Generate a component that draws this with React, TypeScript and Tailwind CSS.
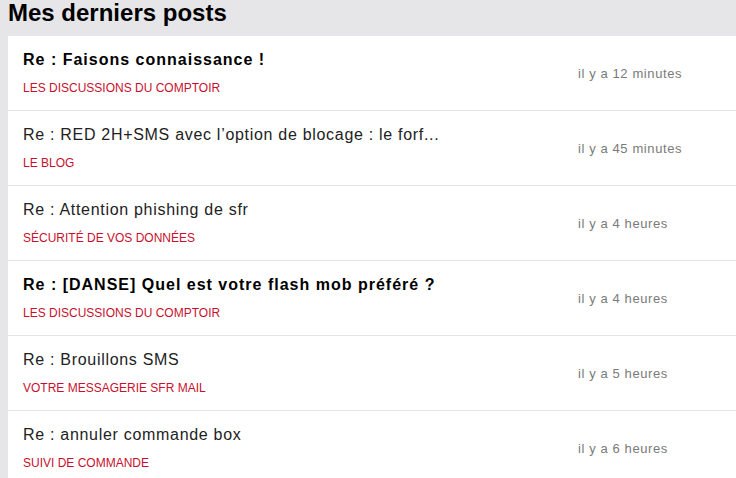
const POSTS = [
  { title: 'Re : Faisons connaissance !', board: 'LES DISCUSSIONS DU COMPTOIR', when: 'il y a 12 minutes', unread: true },
  { title: 'Re : RED 2H+SMS avec l’option de blocage : le forf...', board: 'LE BLOG', when: 'il y a 45 minutes', unread: false },
  { title: 'Re : Attention phishing de sfr', board: 'SÉCURITÉ DE VOS DONNÉES', when: 'il y a 4 heures', unread: false },
  { title: 'Re : [DANSE] Quel est votre flash mob préféré ?', board: 'LES DISCUSSIONS DU COMPTOIR', when: 'il y a 4 heures', unread: true },
  { title: 'Re : Brouillons SMS', board: 'VOTRE MESSAGERIE SFR MAIL', when: 'il y a 5 heures', unread: false },
  { title: 'Re : annuler commande box', board: 'SUIVI DE COMMANDE', when: 'il y a 6 heures', unread: false },
]

export default function App() {
  return (
    <div className="min-h-[478px] bg-[#e6e6e9] pl-2 font-['Liberation_Sans',Arial,sans-serif]">
      <h2 className="h-9 text-[24px] font-bold leading-[25px] text-black">Mes derniers posts</h2>
      <ul className="bg-white">
        {POSTS.map((p) => (
          <li
            key={p.title}
            className="grid h-[75px] grid-cols-[1fr_158px] items-center border-b border-[#e4e4e4] pl-[15px]"
          >
            <div className="flex flex-col gap-[10px]">
              <a
                className={`text-[16px] leading-5 ${
                  p.unread ? 'font-bold tracking-[1px] text-black' : 'tracking-[0.7px] text-[#222]'
                }`}
              >
                {p.title}
              </a>
              <span className="text-[12px] leading-4 text-[#c8102e]">{p.board}</span>
            </div>
            <span className="pt-[1px] text-[13px] tracking-[0.6px] text-[#7a7a7a]">{p.when}</span>
          </li>
        ))}
      </ul>
    </div>
  )
}
